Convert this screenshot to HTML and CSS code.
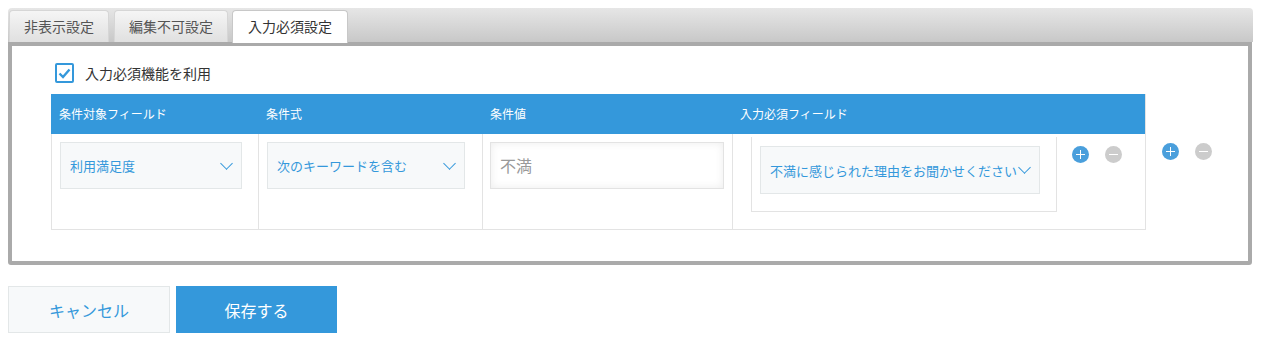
FILE: index.html
```html
<!DOCTYPE html>
<html lang="ja">
<head>
  <meta charset="UTF-8" />
  <title>入力必須設定</title>
  <link rel="stylesheet" href="styles.css">
</head>
<body>
  <div class="wrap">
    <div class="tabs">
      <div class="tab t1">非表示設定</div>
      <div class="tab t2">編集不可設定</div>
      <div class="tab t3 active">入力必須設定</div>
    </div>

    <div class="panel">
      <label class="check">
        <span class="box">
          <svg width="13" height="11" viewBox="0 0 13 11"><path d="M1.5 5.5l3.5 3.5 6.5-7.5" fill="none" stroke="#3498db" stroke-width="2.4"/></svg>
        </span>
        入力必須機能を利用
      </label>

      <div class="rows">
        <div class="table">
          <div class="th">条件対象フィールド</div>
          <div class="th">条件式</div>
          <div class="th">条件値</div>
          <div class="th">入力必須フィールド</div>

          <div class="td">
            <div class="select w1"><span>利用満足度</span><i class="chev"></i></div>
          </div>
          <div class="td">
            <div class="select w2"><span>次のキーワードを含む</span><i class="chev"></i></div>
          </div>
          <div class="td c3">
            <div class="input">不満</div>
          </div>
          <div class="td c4">
            <div class="inner">
              <div class="select w4"><span>不満に感じられた理由をお聞かせください</span><i class="chev"></i></div>
            </div>
            <div class="ops">
              <span class="op add"></span>
              <span class="op del"></span>
            </div>
          </div>
        </div>
        <div class="ops outer">
          <span class="op add"></span>
          <span class="op del"></span>
        </div>
      </div>
    </div>

    <div class="actions">
      <button class="btn cancel">キャンセル</button>
      <button class="btn save">保存する</button>
    </div>
  </div>
</body>
</html>
```

FILE: styles.css
```css
*{box-sizing:border-box;margin:0;padding:0}
body{margin:8px;font-family:"Noto Sans CJK JP","Noto Sans",sans-serif;color:#333;background:#fff}
.wrap{width:1245px}

/* tabs */
.tabs{display:flex;height:34px;padding:2px 0 0 1px;
  background:linear-gradient(#e6e6e6,#c8c8c8);border-radius:4px 4px 0 0}
.tab{height:32px;line-height:31px;font-size:14px;color:#555;text-align:center;
  background:linear-gradient(#f5f5f5,#e0e0e0);border:1px solid #d6d6d6;border-bottom:none;
  border-radius:4px 4px 0 0}
.t1{width:100px}
.t2{width:114px;margin-left:5px}
.t3{width:116px;margin-left:4px}
.tab.active{background:#fff;color:#333;height:33px;position:relative;z-index:1;border-color:#c8c8c8}

/* panel */
.panel{margin-right:1px;border:4px solid #aaa;border-radius:0 0 3px 3px;
  padding:17px 0 31px 39px;background:#fff}
.check{display:flex;align-items:center;gap:11px;margin-left:4px;font-size:14px;line-height:20px;color:#333}
.box{width:19px;height:20px;border:2px solid #3498db;border-radius:2px;display:flex;align-items:center;justify-content:center}

.rows{display:flex;margin-top:11px}
.table{display:grid;grid-template-columns:207px 224px 250px 413px;border-right:1px solid #e3e3e3}
.th{height:40px;background:#3498db;color:#fff;font-size:12px;line-height:40px;padding-left:8px}
.td{height:96px;border-left:1px solid #e3e3e3;border-bottom:1px solid #e3e3e3;padding:8px 0 0 8px}
.c3{padding-left:7px}
.c4{display:flex;padding:0 0 0 18px}

.select{height:47px;display:flex;align-items:center;justify-content:space-between;
  background:#f7f9fa;border:1px solid #e3e7e8;color:#3498db;font-size:13px;padding:0 10px 0 9px}
.w1{width:182px}
.w2{width:198px}
.w4{width:280px;height:48px;padding-right:10px}
.chev{width:9px;height:9px;border-right:1.5px solid #3498db;border-bottom:1.5px solid #3498db;
  transform:rotate(45deg);margin-top:-5px;flex:none}
.w4 .chev{margin-left:2px}

.input{width:234px;height:47px;border:1px solid #e3e3e3;background:#fff;
  box-shadow:inset 0 0 8px rgba(0,0,0,.08);color:#999;font-size:16px;line-height:45px;padding-left:9px}

.inner{width:306px;height:75px;margin-top:3px;border:1px solid #e3e3e3;border-top:none;padding:9px 0 0 8px}

.ops{display:flex;gap:16px;margin:12px 0 0 15px;height:17px}
.ops.outer{margin:49px 0 0 16px}
.op{width:17px;height:17px;border-radius:50%;position:relative;display:block}
.op.add{background:#4a9fdc}
.op.del{background:#ccc}
.op::before,.op.add::after{content:"";position:absolute;background:#fff;left:4px;top:8px;width:9px;height:1px}
.op.add::after{left:8px;top:4px;width:1px;height:9px}

/* buttons */
.actions{display:flex;gap:6px;margin-top:21px}
.btn{width:162px;height:47px;font-family:inherit;font-size:16px;cursor:pointer;border:1px solid #e3e7e8}
.cancel{background:#f7f9fa;color:#3498db}
.save{width:161px;background:#3498db;border-color:#3498db;color:#fff}
```
